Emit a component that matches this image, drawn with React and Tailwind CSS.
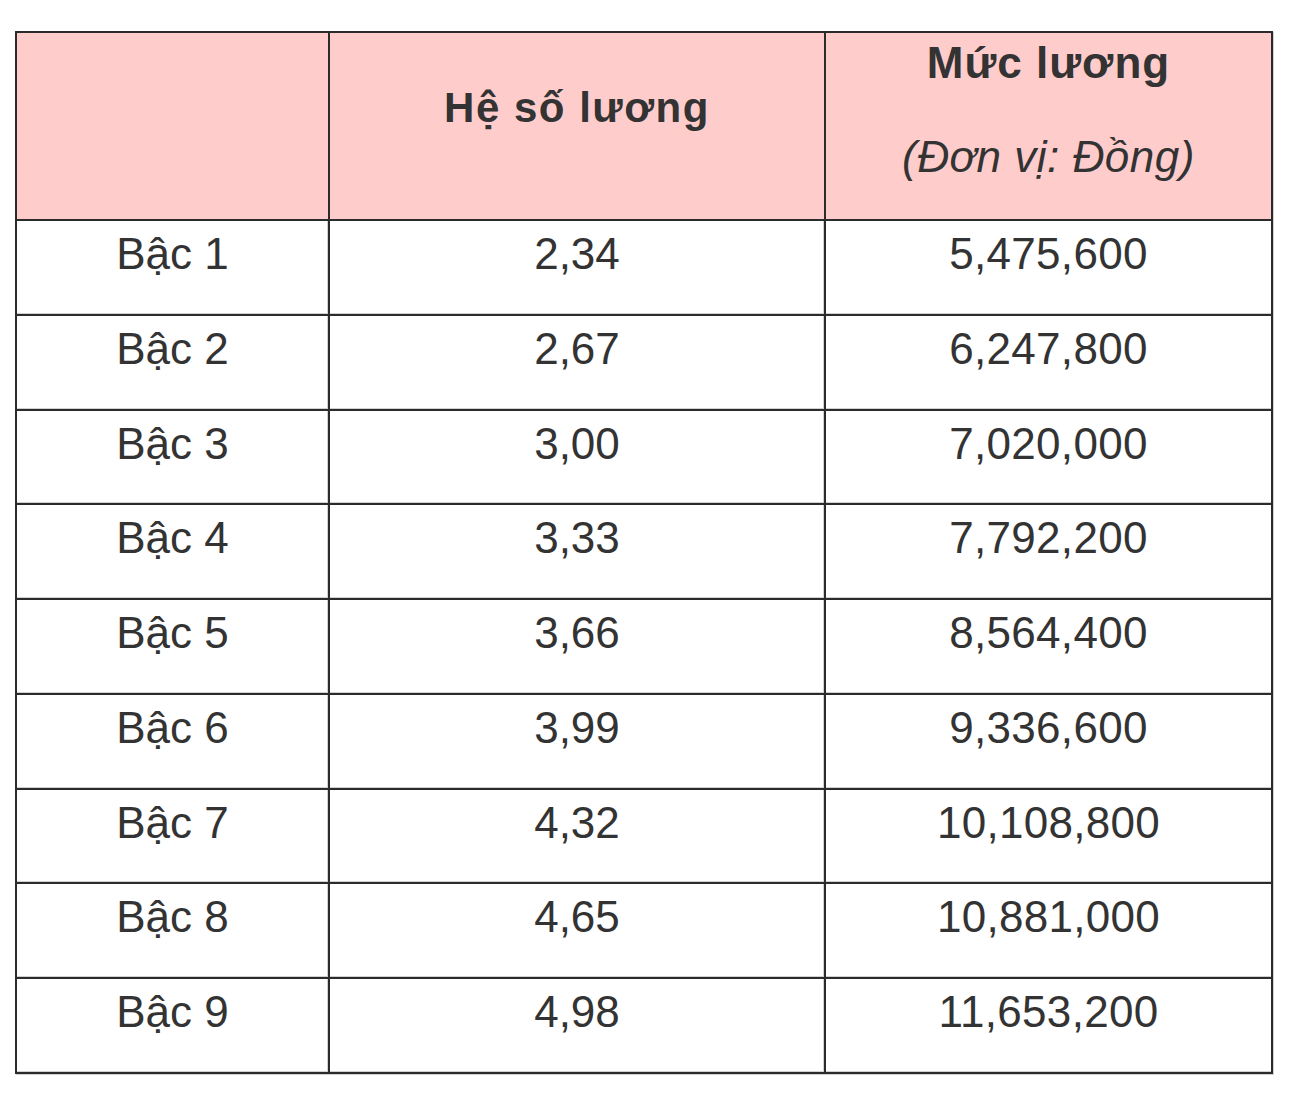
import React from "react";

const rows = [
  ["Bậc 1", "2,34", "5,475,600"],
  ["Bậc 2", "2,67", "6,247,800"],
  ["Bậc 3", "3,00", "7,020,000"],
  ["Bậc 4", "3,33", "7,792,200"],
  ["Bậc 5", "3,66", "8,564,400"],
  ["Bậc 6", "3,99", "9,336,600"],
  ["Bậc 7", "4,32", "10,108,800"],
  ["Bậc 8", "4,65", "10,881,000"],
  ["Bậc 9", "4,98", "11,653,200"],
];

export default function App() {
  return (
    <div
      className="w-[1290px] h-[1104px] bg-white pt-[31px] pl-[15px] text-[#333333]"
      style={{ fontFamily: '"Liberation Sans", Arial, Helvetica, sans-serif' }}
    >
      <div className="w-[1258px] border-2 border-[#2b2b2b] shadow-[1px_1px_0_#d0d0d0]">
        {/* Header */}
        <div className="flex h-[186px] bg-[#ffcccc]">
          <div className="w-[311px]" />
          <div className="w-[496px] border-l-2 border-[#2b2b2b] pt-[45px] text-center">
            <div className="text-[42px] font-bold leading-[60px] tracking-[1.5px]">Hệ số lương</div>
          </div>
          <div className="w-[447px] border-l-2 border-[#2b2b2b] text-center">
            <div className="text-[44px] font-bold leading-[60px] tracking-[1px]">Mức lương</div>
            <div className="mt-[34px] text-[44px] italic leading-[60px] tracking-[0.5px]">(Đơn vị: Đồng)</div>
          </div>
        </div>
        {/* Body */}
        {rows.map((r, i) => (
          <div
            key={i}
            className="flex h-[94.75px] border-t-2 border-[#2b2b2b] text-[44px] leading-[66px]"
          >
            <div className="w-[311px] text-center shadow-[inset_-1px_-1px_0_#d0d0d0]">{r[0]}</div>
            <div className="w-[496px] border-l-2 border-[#2b2b2b] text-center shadow-[inset_-1px_-1px_0_#d0d0d0]">
              {r[1]}
            </div>
            <div className="w-[447px] border-l-2 border-[#2b2b2b] text-center tracking-[0.3px] shadow-[inset_0_-1px_0_#d0d0d0]">
              {r[2]}
            </div>
          </div>
        ))}
      </div>
    </div>
  );
}
